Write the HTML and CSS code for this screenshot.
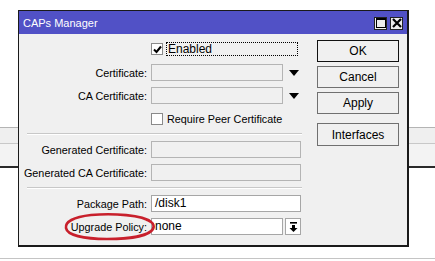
FILE: index.html
```html
<!DOCTYPE html>
<html lang="en">
<head>
    <meta charset="UTF-8">
    <title>CAPs Manager</title>
    <link rel="stylesheet" href="styles.css">
</head>
<body>
    <div class="band"></div>
    <div class="floor"></div>

    <div class="window">
        <div class="titlebar">
            <span class="title">CAPs Manager</span>
            <span class="tb-btn">
                <svg width="10" height="10" viewBox="0 0 10 10"><rect x="0.5" y="0.5" width="9" height="9" fill="none" stroke="#000"/><rect x="0" y="0" width="10" height="2" fill="#000"/></svg>
            </span>
            <span class="tb-btn">
                <svg width="10" height="10" viewBox="0 0 10 10"><path d="M1 1 L9 9 M9 1 L1 9" stroke="#000" stroke-width="2.2"/></svg>
            </span>
        </div>

        <div class="content">
            <div class="form">
                <div class="row check-row first">
                    <span class="label"></span>
                    <span class="check checked">
                        <svg width="9" height="9" viewBox="0 0 9 9"><path d="M1 4.5 L3.5 7 L8 1.5" fill="none" stroke="#000" stroke-width="2"/></svg>
                    </span>
                    <span class="check-text focus">Enabled</span>
                </div>
                <div class="row">
                    <span class="label">Certificate:</span>
                    <span class="field short disabled"></span>
                    <span class="arrow"></span>
                </div>
                <div class="row">
                    <span class="label">CA Certificate:</span>
                    <span class="field short disabled"></span>
                    <span class="arrow"></span>
                </div>
                <div class="row check-row">
                    <span class="label"></span>
                    <span class="check"></span>
                    <span class="check-text">Require Peer Certificate</span>
                </div>
                <div class="sep"></div>
                <div class="row">
                    <span class="label">Generated Certificate:</span>
                    <span class="field disabled"></span>
                </div>
                <div class="row">
                    <span class="label">Generated CA Certificate:</span>
                    <span class="field disabled"></span>
                </div>
                <div class="sep"></div>
                <div class="row">
                    <span class="label">Package Path:</span>
                    <span class="field">/disk1</span>
                </div>
                <div class="row">
                    <span class="label">Upgrade Policy:</span>
                    <span class="field short">none</span>
                    <span class="drop-btn">
                        <svg width="9" height="10" viewBox="0 0 9 10"><rect x="1" y="0" width="7" height="1.6" fill="#000"/><path d="M3 3 H6 V6 H8.5 L4.5 10 L0.5 6 H3 Z" fill="#000"/></svg>
                    </span>
                </div>
            </div>

            <div class="buttons">
                <div class="btn default">OK</div>
                <div class="btn">Cancel</div>
                <div class="btn">Apply</div>
                <div class="btn spaced">Interfaces</div>
            </div>
        </div>

        <svg class="circle" width="96" height="30" viewBox="0 0 96 30">
            <path d="M88 10 C80 3 50 1 28 3 C10 5 2 10 3 16 C4 23 20 27 44 27 C66 27 86 24 90 17 C92 13 89 9 84 8" fill="none" stroke="#c8202c" stroke-width="2.6" stroke-linecap="round"/>
        </svg>
    </div>
</body>
</html>
```

FILE: styles.css
```css
body {
    margin: 0;
    background: #fff;
    font-family: "Liberation Sans", Arial, sans-serif;
    font-size: 11px;
    color: #000;
    width: 435px;
    height: 261px;
    overflow: hidden;
}
.band {
    margin-top: 127px;
    height: 38px;
    border-top: 1px solid #b4b4b4;
    border-bottom: 2px solid #2a2a2a;
    background: linear-gradient(#efefef 0 15px, #c8c8c8 15px 16px, #f3f3f3 16px);
}
.floor {
    margin-top: 90px;
    border-top: 1px solid #c4c4c4;
}
.window {
    position: absolute;
    left: 18px;
    top: 10px;
    width: 388px;
    height: 234px;
    border: 1px solid #1a1a1a;
    border-bottom-width: 2px;
    border-right-width: 2px;
    background: #f0f0f0;
}
.titlebar {
    height: 22px;
    background: #5151c6;
    display: flex;
    align-items: center;
    padding: 1px 4px 0 4px;
    gap: 3px;
}
.title {
    flex: 1;
    color: #fff;
    font-size: 11px;
}
.tb-btn {
    width: 11px;
    height: 11px;
    background: #ececec;
    border: 1px solid #222;
    display: flex;
    align-items: center;
    justify-content: center;
}
.content {
    display: flex;
    padding: 8px 0 0 0;
}
.form {
    width: 290px;
    display: flex;
    flex-direction: column;
    gap: 6px;
}
.row {
    display: flex;
    align-items: center;
    height: 17px;
}
.row.first {
    height: 14px;
    margin-bottom: 2px;
}
.label {
    width: 128px;
    text-align: right;
    padding-right: 4px;
    white-space: nowrap;
    font-size: 10.8px;
}
.field {
    box-sizing: border-box;
    width: 150px;
    height: 17px;
    border: 1px solid #a6a6a6;
    background: #fff;
    padding: 1px 3px;
    line-height: 13px;
    font-size: 12px;
}
.field.disabled {
    background: #f0f0f0;
    border-color: #b4b4b4;
}
.field.short {
    width: 132px;
}
.arrow {
    margin-left: 6px;
    width: 0;
    height: 0;
    border-left: 5px solid transparent;
    border-right: 5px solid transparent;
    border-top: 6px solid #000;
}
.drop-btn {
    box-sizing: border-box;
    margin-left: 2px;
    width: 16px;
    height: 17px;
    border: 1px solid #a6a6a6;
    background: #fff;
    display: flex;
    align-items: center;
    justify-content: center;
}
.check {
    box-sizing: border-box;
    width: 12px;
    height: 12px;
    border: 1px solid #8a8a8a;
    background: #fff;
    display: flex;
    align-items: center;
    justify-content: center;
}
.check-text {
    margin-left: 3px;
    padding: 0 1px;
    font-size: 10.8px;
    line-height: 12px;
}
.check-text.focus {
    width: 128px;
    border: 1px dotted #000;
    font-size: 12px;
}
.sep {
    height: 1px;
    margin-left: 8px;
    width: 275px;
    background: #c8c8c8;
    border-bottom: 1px solid #fff;
}
.buttons {
    margin-left: 8px;
    margin-top: -2px;
    display: flex;
    flex-direction: column;
    gap: 4px;
}
.btn {
    box-sizing: border-box;
    width: 82px;
    height: 22px;
    border: 1px solid #707070;
    display: flex;
    align-items: center;
    justify-content: center;
    font-size: 12px;
}
.btn.default {
    border-color: #111;
}
.btn.spaced {
    margin-top: 5px;
    height: 23px;
}
.circle {
    position: absolute;
    left: 44px;
    top: 201px;
}
```
